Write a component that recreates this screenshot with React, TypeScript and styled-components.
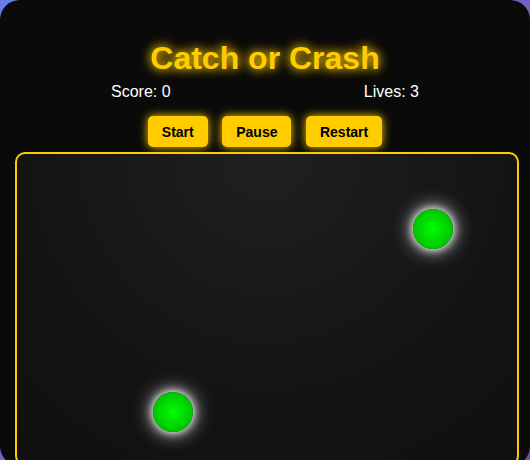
import styled, { createGlobalStyle } from 'styled-components'

const GlobalStyle = createGlobalStyle`
    html, body {
        margin: 0;
        padding: 0;
    }
    body {
        background: linear-gradient(135deg, #667eea 0%, #764ba2 100%);
        font-family: "Liberation Sans", Arial, sans-serif;
        overflow: hidden;
    }
`

const balls = [
    { left: 136, top: 238 },
    { left: 396, top: 55 },
]

export default function App() {
    return (
        <>
            <GlobalStyle />
            <Container>
                <Title>Catch or Crash</Title>
                <Stats>
                    <span>Score: 0</span>
                    <span>Lives: 3</span>
                </Stats>
                <Controls>
                    <Button>Start</Button>
                    <Button>Pause</Button>
                    <Button>Restart</Button>
                </Controls>
                <GameArea>
                    {balls.map((b, i) => (
                        <Ball key={i} style={{ left: b.left, top: b.top }} />
                    ))}
                </GameArea>
            </Container>
        </>
    )
}

const Container = styled.div`
    background: #0a0a0a;
    border-radius: 20px;
    width: 530px;
    height: 466px;
    box-sizing: border-box;
    padding: 40px 13px 0 13px;
    color: #fff;
    display: flex;
    flex-direction: column;
    align-items: center;
`

const Title = styled.h1`
    margin: 0;
    font-size: 32px;
    line-height: 37px;
    font-weight: bold;
    color: #ffcc00;
    text-shadow: 0 0 10px #ffcc00, 0 0 14px rgba(255, 204, 0, 0.6);
`

const Stats = styled.div`
    display: flex;
    justify-content: space-between;
    width: 308px;
    margin-top: 6px;
    font-size: 16px;
    line-height: 18px;
`

const Controls = styled.div`
    display: flex;
    gap: 14.5px;
    margin-top: 15px;
`

const Button = styled.button`
    background: #ffcc00;
    color: #000;
    border: none;
    border-radius: 5px;
    height: 31px;
    padding: 0 14px;
    font-family: "Liberation Sans", Arial, sans-serif;
    font-size: 14px;
    font-weight: bold;
    box-shadow: 0 0 10px #ffcc00;
    cursor: pointer;
`

const GameArea = styled.div`
    position: relative;
    margin-top: 5px;
    align-self: flex-start;
    margin-left: 2px;
    width: 504px;
    height: 400px;
    box-sizing: border-box;
    border: 2px solid #ffcc00;
    border-radius: 10px;
    background: radial-gradient(circle at 50% 0%, #202020 0%, #141414 60%, #101010 100%);
    overflow: hidden;
`

const Ball = styled.div`
    position: absolute;
    width: 40px;
    height: 40px;
    border-radius: 50%;
    background: radial-gradient(circle, #00ff00 0%, #00aa00 100%);
    box-shadow: 0 0 20px #fff, 0 0 8px #fff;
`
